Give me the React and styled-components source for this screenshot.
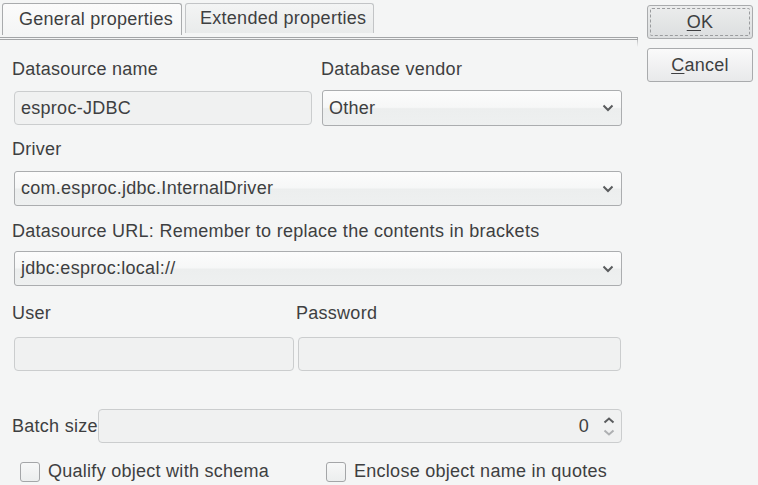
import React from "react";
import styled, { createGlobalStyle } from "styled-components";

const GlobalStyle = createGlobalStyle`
  html, body {
    margin: 0;
    padding: 0;
    background: #f4f5f5;
  }
  body {
    font-family: "Liberation Sans", Arial, sans-serif;
    font-size: 18px;
    letter-spacing: 0.27px;
    color: #3e3f41;
  }
`;

const Dialog = styled.div`
  display: flex;
  width: 758px;
  height: 485px;
  overflow: hidden;
`;

const Main = styled.div`
  width: 638px;
  display: flex;
  flex-direction: column;
`;

const TabBar = styled.div`
  height: 37px;
  display: flex;
  align-items: flex-end;
  gap: 3px;
  padding-left: 2px;
  box-sizing: border-box;
`;

const Tab = styled.div`
  box-sizing: border-box;
  width: ${(p) => p.$width}px;
  height: ${(p) => (p.$active ? 32 : 30)}px;
  margin-bottom: ${(p) => (p.$active ? 2 : 4)}px;
  padding-left: ${(p) => p.$pad}px;
  display: flex;
  align-items: center;
  border: 1px solid ${(p) => (p.$active ? "#a9abad" : "#c2c4c6")};
  border-bottom: none;
  border-radius: 3px 3px 0 0;
  background: ${(p) =>
    p.$active
      ? "linear-gradient(#fbfbfb, #f4f5f5)"
      : "linear-gradient(#f3f4f4, #e9ebeb)"};
  white-space: nowrap;
`;

const Panel = styled.div`
  flex: 1;
  border-top: 3px double #a3a5a7;
  padding: 0 16px 0 14px;
  position: relative;

  &::after {
    content: "";
    position: absolute;
    right: 0;
    top: -3px;
    width: 1px;
    height: 10px;
    background: linear-gradient(#a3a5a7, rgba(163, 165, 167, 0));
  }
`;

const Label = styled.div`
  height: 20px;
  line-height: 20px;
  margin-left: ${(p) => p.$shift || -2}px;
  white-space: nowrap;
`;

const Section = styled.div`
  margin-top: ${(p) => p.$top}px;
`;

const Pair = styled.div`
  display: grid;
  grid-template-columns: ${(p) => p.$cols};
  column-gap: ${(p) => p.$gap}px;
`;

const Column = styled.div`
  display: flex;
  flex-direction: column;
  gap: ${(p) => p.$gap}px;
`;

const TextField = styled.div`
  box-sizing: border-box;
  height: 34px;
  border: 1px solid #cbcdce;
  border-radius: 4px;
  background: #f0f1f1;
  display: flex;
  align-items: center;
  padding: 0 6px;
`;

const Combo = styled.div`
  box-sizing: border-box;
  height: ${(p) => p.$h || 35}px;
  border: 1px solid #abadaf;
  border-radius: 3px;
  background: linear-gradient(#fcfcfc 0%, #f6f7f7 48%, #eceeee 52%, #eef0f0 100%);
  display: flex;
  align-items: center;
  justify-content: space-between;
  padding: 0 7px 0 6px;
`;

const Chevron = () => (
  <svg width="12" height="8" viewBox="0 0 12 8">
    <path d="M1.5 1.5 L6 6 L10.5 1.5" fill="none" stroke="#5a5c5e" strokeWidth="2" />
  </svg>
);

const BatchRow = styled.div`
  display: flex;
  align-items: center;
  height: 34px;
`;

const BatchLabel = styled.div`
  margin-left: -2px;
  width: 86px;
  white-space: nowrap;
`;

const NumberField = styled(TextField)`
  flex: 1;
  justify-content: flex-end;
  gap: 14px;
  padding-right: 6px;
`;

const Spinner = styled.div`
  display: flex;
  flex-direction: column;
  gap: 5px;
`;

const Checks = styled.div`
  display: grid;
  grid-template-columns: 306px 1fr;
  padding-left: 6px;
  margin-top: 18px;
`;

const CheckItem = styled.label`
  display: flex;
  align-items: center;
  gap: 8px;
  white-space: nowrap;
`;

const Box = styled.span`
  box-sizing: border-box;
  width: 20px;
  height: 20px;
  border: 1px solid #a4a6a8;
  border-radius: 3px;
  background: linear-gradient(#f7f8f8, #eceeee);
`;

const Side = styled.div`
  flex: 1;
  display: flex;
  flex-direction: column;
  gap: 9px;
  padding: 5px 0 0 9px;
`;

const Button = styled.div`
  box-sizing: border-box;
  width: 106px;
  height: 34px;
  border: 1px solid #a9abad;
  border-radius: 3px;
  background: ${(p) =>
    p.$default
      ? "linear-gradient(#eceded, #dcdedf)"
      : "linear-gradient(#fafafa, #e8e9ea)"};
  display: flex;
  align-items: center;
  justify-content: center;
  position: relative;

  ${(p) =>
    p.$default &&
    `&::before {
      content: "";
      position: absolute;
      inset: 2px;
      border: 1px dashed #9a9c9e;
      border-radius: 2px;
    }`}

  u {
    text-underline-offset: 2px;
  }
`;

export default function App() {
  return (
    <>
      <GlobalStyle />
      <Dialog>
        <Main>
          <TabBar>
            <Tab $active $width={180} $pad={16}>General properties</Tab>
            <Tab $width={189} $pad={14}>Extended properties</Tab>
          </TabBar>
          <Panel>
            <Section $top={19}>
              <Pair $cols="298px 300px" $gap={10}>
                <Column $gap={12}>
                  <Label>Datasource name</Label>
                  <TextField>esproc-JDBC</TextField>
                </Column>
                <Column $gap={11}>
                  <Label $shift={-1}>Database vendor</Label>
                  <Combo $h={36}>
                    Other
                    <Chevron />
                  </Combo>
                </Column>
              </Pair>
            </Section>

            <Section $top={13}>
              <Column $gap={12}>
                <Label>Driver</Label>
                <Combo>
                  com.esproc.jdbc.InternalDriver
                  <Chevron />
                </Combo>
              </Column>
            </Section>

            <Section $top={15}>
              <Column $gap={10}>
                <Label>Datasource URL: Remember to replace the contents in brackets</Label>
                <Combo>
                  jdbc:esproc:local://
                  <Chevron />
                </Combo>
              </Column>
            </Section>

            <Section $top={17}>
              <Pair $cols="280px 323px" $gap={4}>
                <Column $gap={14}>
                  <Label>User</Label>
                  <TextField />
                </Column>
                <Column $gap={14}>
                  <Label>Password</Label>
                  <TextField />
                </Column>
              </Pair>
            </Section>

            <Section $top={38}>
              <BatchRow>
                <BatchLabel>Batch size</BatchLabel>
                <NumberField>
                  0
                  <Spinner>
                    <svg width="12" height="7" viewBox="0 0 12 7">
                      <path d="M1.5 5.5 L6 1.5 L10.5 5.5" fill="none" stroke="#5a5c5e" strokeWidth="2" />
                    </svg>
                    <svg width="12" height="7" viewBox="0 0 12 7">
                      <path d="M1.5 1.5 L6 5.5 L10.5 1.5" fill="none" stroke="#aeb0b2" strokeWidth="2" />
                    </svg>
                  </Spinner>
                </NumberField>
              </BatchRow>
            </Section>

            <Checks>
              <CheckItem>
                <Box />
                Qualify object with schema
              </CheckItem>
              <CheckItem>
                <Box />
                Enclose object name in quotes
              </CheckItem>
            </Checks>
          </Panel>
        </Main>
        <Side>
          <Button $default>
            <span>
              <u>O</u>K
            </span>
          </Button>
          <Button>
            <span>
              <u>C</u>ancel
            </span>
          </Button>
        </Side>
      </Dialog>
    </>
  );
}
